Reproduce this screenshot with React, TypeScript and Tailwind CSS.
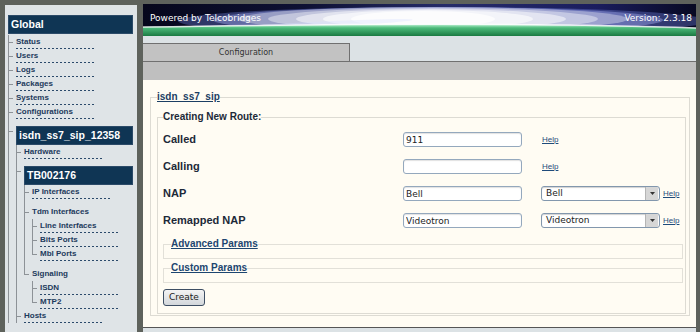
import React from 'react';

type TreeNode = { label: string; box?: boolean; last?: boolean; children?: TreeNode[] };

const tree: TreeNode[] = [
  { label: 'Status' },
  { label: 'Users' },
  { label: 'Logs' },
  { label: 'Packages' },
  { label: 'Systems' },
  { label: 'Configurations' },
  {
    label: 'isdn_ss7_sip_12358',
    box: true,
    children: [
      { label: 'Hardware' },
      {
        label: 'TB002176',
        box: true,
        children: [
          { label: 'IP Interfaces' },
          {
            label: 'Tdm Interfaces',
            children: [{ label: 'Line Interfaces' }, { label: 'Bits Ports' }, { label: 'Mbl Ports', last: true }],
          },
          { label: 'Signaling', last: true, children: [{ label: 'ISDN' }, { label: 'MTP2', last: true }] },
        ],
      },
      { label: 'Hosts' },
    ],
  },
];

const Box = ({ label }: { label: string }) => (
  <div className="h-[19px] bg-[#0f3554] border border-[#2b4a68] pl-[2px] text-white text-[10.5px] font-bold leading-[17px]">
    {label}
  </div>
);

function Branch({ node }: { node: TreeNode }) {
  const folder = !!node.children;
  const tick = node.box ? 'h-[13px]' : folder ? 'h-[14px]' : 'h-[8px]';
  return (
    <div className="flex">
      {/* connector column */}
      <div className="w-[8px] shrink-0 flex flex-col">
        <div className={`w-[5px] border-l border-b border-[#8d9297] ${tick}`} />
        {!node.last && <div className="flex-1 border-l border-[#8d9297]" />}
      </div>
      <div className={`flex-1 min-w-0 ${node.box ? 'pt-[7px]' : folder ? 'pt-[6px]' : ''}`}>
        {node.box ? (
          <Box label={node.label} />
        ) : (
          <div className="h-[14px] flex flex-col">
            <div className="pt-[1px] h-[13px] leading-[12px] text-[8px] font-bold text-[#1d3a5c] whitespace-nowrap">
              {node.label}
            </div>
            {!folder && (
              <div className="w-[80px] h-px bg-[repeating-linear-gradient(90deg,#2b4a6b_0_2px,transparent_2px_4px)]" />
            )}
          </div>
        )}
        {node.children && (
          <div>
            {node.children.map((c) => (
              <Branch key={c.label} node={c} />
            ))}
          </div>
        )}
      </div>
    </div>
  );
}

// ellipse drawn as a path
const ell = (cx: number, cy: number, rx: number, ry: number) =>
  `M${cx - rx} ${cy} A${rx} ${ry} 0 1 0 ${cx + rx} ${cy} A${rx} ${ry} 0 1 0 ${cx - rx} ${cy} Z`;

// stacked translucent layers make the soft glow
const glow: [number, number, number, number, string, number][] = [
  [300, 17, 265, 14, '#6a78cc', 0.4],
  [295, 16, 225, 13, '#a0a8ea', 0.45],
  [290, 15, 195, 12, '#ffffff', 0.35],
  [290, 15, 165, 11, '#ffffff', 0.4],
  [288, 15, 135, 10, '#ffffff', 0.5],
  [285, 15, 105, 9, '#ffffff', 0.6],
  [280, 15, 72, 8, '#ffffff', 0.7],
];

const Header = () => (
  <div className="h-[32px] overflow-hidden">
    <svg width="553" height="32" viewBox="0 0 553 32" className="block">
      <defs>
        <linearGradient id="hdrBase" x1="0" x2="1" y1="0" y2="0">
          <stop offset="0" stopColor="#06071c" />
          <stop offset="0.3" stopColor="#0e1134" />
          <stop offset="0.55" stopColor="#262c6a" />
          <stop offset="0.82" stopColor="#1a1d5e" />
          <stop offset="1" stopColor="#070922" />
        </linearGradient>
        <linearGradient id="hdrGreen" x1="0" x2="0" y1="0" y2="1">
          <stop offset="0" stopColor="#b6f0cf" />
          <stop offset="0.3" stopColor="#4cba7a" />
          <stop offset="1" stopColor="#1b7a42" />
        </linearGradient>
      </defs>
      <rect width="553" height="32" fill="url(#hdrBase)" />
      {glow.map(([cx, cy, rx, ry, c, o], i) => (
        <path key={i} d={ell(cx, cy, rx, ry)} fill={c} fillOpacity={o} />
      ))}
      <path d={ell(150, 22, 120, 3)} fill="#d8e0ff" fillOpacity="0.35" transform="rotate(-3 150 22)" />
      <path d="M0 23 C120 21 380 18 553 24 L553 32 L0 32 Z" fill="url(#hdrGreen)" />
      <path d="M0 23 C120 21 380 18 553 24" stroke="#ffffff" strokeOpacity="0.8" strokeWidth="1.5" fill="none" />
      <text x="7" y="17" fill="#ffffff" fontSize="9" fontFamily="DejaVu Sans, sans-serif">
        Powered by Telcobridges
      </text>
      <text x="549" y="17" fill="#ffffff" fontSize="9" fontFamily="DejaVu Sans, sans-serif" textAnchor="end">
        Version: 2.3.18
      </text>
    </svg>
  </div>
);

const Input = ({ value }: { value: string }) => (
  <input
    readOnly
    defaultValue={value}
    className="w-[119px] h-[15px] bg-white border border-[#94a8bd] rounded-[3px] px-[2px] text-[9px] text-[#222] font-['DejaVu_Sans',sans-serif] shadow-[inset_0_1px_1px_rgba(0,0,0,0.12)] outline-none"
  />
);

const Select = ({ value }: { value: string }) => (
  <div className="w-[119px] h-[15px] bg-white border border-[#8297ad] rounded-[3px] flex items-center shadow-[inset_0_1px_1px_rgba(0,0,0,0.18)] font-['DejaVu_Sans',sans-serif] text-[9px] text-[#222]">
    <span className="flex-1 pl-[4px]">{value}</span>
    <span className="w-[13px] h-[13px] mr-px bg-[#d6d6d6] border-l border-[#b5b5b5] flex items-center justify-center">
      <svg width="5" height="3" viewBox="0 0 5 3">
        <path d="M0 0 L5 0 L2.5 3 Z" fill="#333" />
      </svg>
    </span>
  </div>
);

const Help = ({ cls }: { cls?: string }) => (
  <span className={`text-[8px] underline text-[#1f4b7a] ${cls ?? ''}`}>Help</span>
);

const Label = ({ text }: { text: string }) => (
  <div className="text-[11px] font-bold leading-[15px] text-[#1c2938]">{text}</div>
);

export default function App() {
  return (
    <div className="w-[700px] h-[332px] overflow-hidden bg-[#5e625c] flex pt-[4px] pl-[5px] pr-[4px] gap-[6px] font-['Liberation_Sans',Arial,sans-serif]">
      {/* Sidebar tree */}
      <aside className="w-[132px] shrink-0 mt-[1px] bg-[#dfe4e7] pt-[10px] pl-[3px] pr-[4px]">
        <Box label="Global" />
        <div className="pt-px">
          {tree.map((n) => (
            <Branch key={n.label} node={n} />
          ))}
        </div>
      </aside>

      {/* Main panel */}
      <main className="w-[553px] shrink-0 flex flex-col">
        <Header />
        <div className="h-[25px] bg-[#dce2e5] flex items-end">
          <div className="w-[207px] h-[18px] bg-[#c2c2c2] border-t border-r border-[#707070] flex items-center justify-center font-['DejaVu_Sans',sans-serif] text-[8px] text-[#333]">
            Configuration
          </div>
        </div>
        <div className="h-[19px] bg-[#bfbfbf] border-t border-[#707070]" />

        <div className="h-[247px] bg-[#fffcf3] pt-[11px] pl-[7px] pr-[6px]">
          <fieldset className="border border-[#dddbd3] pl-[6px] pr-[3px] pt-[8px] pb-[1px]">
            <legend className="text-[10px] leading-[12px] font-bold underline text-[#1b3e63]">isdn_ss7_sip</legend>
            <fieldset className="border border-[#dddbd3] pl-[5px] pr-[2px] pt-[9px] pb-[6px]">
              <legend className="text-[10px] leading-[12px] font-bold text-[#1c2938]">Creating New Route:</legend>

              <div className="grid grid-cols-[240px_138px_1fr] gap-y-[12px] items-center">
                <Label text="Called" />
                <Input value="911" />
                <Help cls="ml-[1px]" />

                <Label text="Calling" />
                <Input value="" />
                <Help cls="ml-[1px]" />

                <Label text="NAP" />
                <Input value="Bell" />
                <div className="flex items-center">
                  <Select value="Bell" />
                  <Help cls="ml-[3px]" />
                </div>

                <Label text="Remapped NAP" />
                <Input value="Videotron" />
                <div className="flex items-center">
                  <Select value="Videotron" />
                  <Help cls="ml-[3px]" />
                </div>
              </div>

              <fieldset className="mt-[10px] border border-[#e2e0d8] pl-[7px] pb-[8px]">
                <legend className="text-[10px] leading-[12px] font-bold underline text-[#1d4670]">Advanced Params</legend>
              </fieldset>
              <fieldset className="mt-[3px] border border-[#e2e0d8] pl-[7px] pb-[8px]">
                <legend className="text-[10px] leading-[12px] font-bold underline text-[#1d4670]">Custom Params</legend>
              </fieldset>

              <button className="mt-[1px] h-[17px] px-[5px] border border-[#3d4e63] rounded-[3px] bg-linear-to-b from-[#f4f4f4] to-[#d3d7db] font-['DejaVu_Sans',sans-serif] text-[9px] text-[#222] leading-none">
                Create
              </button>
            </fieldset>
          </fieldset>
        </div>
        <div className="flex-1 bg-[#dce2e5] border-t border-[#555]" />
      </main>
    </div>
  );
}
